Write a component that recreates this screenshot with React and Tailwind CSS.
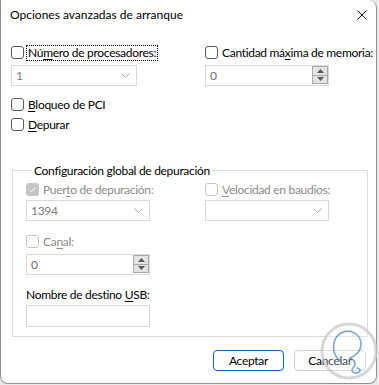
import React from "react";

const font = { fontFamily: "Lato, 'Liberation Sans', sans-serif", letterSpacing: "-0.3px" };

function U({ children }) {
  return <span className="underline underline-offset-[2px]">{children}</span>;
}

function Box({ checked, disabled }) {
  if (checked) {
    return (
      <span className="w-[13px] h-[13px] rounded-[3px] bg-[#c5c5c5] flex items-center justify-center shrink-0">
        <svg width="9" height="9" viewBox="0 0 9 9">
          <path d="M1.5 4.8 L3.6 6.8 L7.6 2.2" fill="none" stroke="#ffffff" strokeWidth="1" />
        </svg>
      </span>
    );
  }
  return (
    <span
      className={
        "w-[13px] h-[13px] rounded-[3px] border bg-white shrink-0 " +
        (disabled ? "border-[#c4c4c4]" : "border-[#5a5a5a]")
      }
    />
  );
}

function Check({ children, checked, disabled, focus }) {
  return (
    <div className="flex items-center h-[13px] whitespace-nowrap">
      <Box checked={checked} disabled={disabled} />
      <span
        className={
          "ml-[3px] leading-[14px] px-[1px] " +
          (disabled ? "text-[#8a8a8a] " : "text-black ") +
          (focus ? "outline outline-1 outline-dotted outline-black" : "")
        }
      >
        {children}
      </span>
    </div>
  );
}

function Combo({ value, w }) {
  return (
    <div className={"h-[21px] border border-[#dadada] bg-white flex items-center justify-between pl-[4px] pr-[6px] " + w}>
      <span className="text-[#7a7a7a] leading-[14px]">{value}</span>
      <svg width="9" height="5" viewBox="0 0 9 5">
        <path d="M0.5 0.5 L4.5 4.5 L8.5 0.5" fill="none" stroke="#a8a8a8" strokeWidth="1" />
      </svg>
    </div>
  );
}

function Spin({ value, w }) {
  return (
    <div className={"h-[21px] border border-[#dadada] bg-white flex items-center justify-between pl-[4px] " + w}>
      <span className="text-[#6b6b6b] leading-[14px]">{value}</span>
      <div className="flex flex-col w-[16px] h-[18px] border border-[#a9a9a9] self-start">
        <div className="flex-1 bg-[#e3e3e3] border-b border-[#a9a9a9] flex items-center justify-center">
          <svg width="7" height="4" viewBox="0 0 7 4"><path d="M0 4 L3.5 0 L7 4 Z" fill="#5a5a5a" /></svg>
        </div>
        <div className="flex-1 bg-[#e3e3e3] flex items-center justify-center">
          <svg width="7" height="4" viewBox="0 0 7 4"><path d="M0 0 L3.5 4 L7 0 Z" fill="#5a5a5a" /></svg>
        </div>
      </div>
    </div>
  );
}

export default function App() {
  return (
    <div className="w-[379px] h-[385px] bg-[#e9e9e9] relative overflow-hidden text-[12px]" style={font}>
      <div className="w-[377px] h-[384px] bg-white border-l border-r border-b border-[#8f8f8f] rounded-tr-[8px] rounded-b-[8px] flex flex-col">
        <div className="h-[30px] flex items-center justify-between pl-[9px] pr-[9px]">
          <span className="text-black text-[12px] leading-[14px] tracking-normal">Opciones avanzadas de arranque</span>
          <svg width="10" height="10" viewBox="0 0 10 10">
            <path d="M0.5 0.5 L9.5 9.5 M9.5 0.5 L0.5 9.5" stroke="#1a1a1a" strokeWidth="1" />
          </svg>
        </div>

        <div className="pl-[10px] mt-[16px] grid grid-cols-[194px_1fr]">
          <div className="flex flex-col">
            <Check focus>
              Nú<U>m</U>ero de procesadores:
            </Check>
            <div className="mt-[6px]">
              <Combo value="1" w="w-[126px]" />
            </div>
          </div>
          <div className="flex flex-col">
            <Check>
              Cantidad má<U>x</U>ima de memoria:
            </Check>
            <div className="mt-[6px]">
              <Spin value="0" w="w-[124px]" />
            </div>
          </div>
        </div>

        <div className="pl-[10px] mt-[12px] flex flex-col gap-[7px]">
          <Check>
            <U>B</U>loqueo de PCI
          </Check>
          <Check>
            <U>D</U>epurar
          </Check>
        </div>

        <fieldset className="ml-[11px] mr-[8px] mt-[33px] h-[173px] border border-[#dcdcdc] px-[13px] pb-[8px]">
          <legend className="ml-[6px] px-[2px] leading-[13px] text-black">Configuración global de depuración</legend>
          <div className="grid grid-cols-[179px_1fr] mt-[6px]">
            <div className="flex flex-col">
              <Check checked disabled>
                Puer<U>t</U>o de depuración:
              </Check>
              <div className="mt-[4px]">
                <Combo value="1394" w="w-[124px]" />
              </div>
              <div className="mt-[14px]">
                <Check disabled>
                  Ca<U>n</U>al:
                </Check>
              </div>
              <div className="mt-[6px]">
                <Spin value="0" w="w-[124px]" />
              </div>
              <div className="mt-[13px] leading-[14px] text-black">
                Nombre de destino <U>U</U>SB:
              </div>
              <div className="mt-[3px] w-[124px] h-[22px] border border-[#dadada] bg-white" />
            </div>
            <div className="flex flex-col">
              <Check disabled>
                <U>V</U>elocidad en baudios:
              </Check>
              <div className="mt-[4px]">
                <Combo value="" w="w-[124px]" />
              </div>
            </div>
          </div>
        </fieldset>

        <div className="flex justify-end gap-[10px] mt-[13px] pr-[10px]">
          <button className="w-[71px] h-[21px] border border-[#0067c0] rounded-[4px] bg-white text-black leading-[14px]">
            Aceptar
          </button>
          <button className="w-[72px] h-[21px] border border-[#cfcfcf] rounded-[4px] bg-[#fdfdfd] text-black leading-[14px]">
            Cancelar
          </button>
        </div>
      </div>

      <svg className="absolute left-[319px] top-[321px]" width="60" height="64" viewBox="0 0 60 64">
        <circle cx="30" cy="30" r="27" fill="rgba(255,255,255,0.25)" stroke="rgba(200,200,205,0.75)" strokeWidth="3" />
        <path
          d="M22 40 C12 34 12 18 22 12 C31 7 42 13 42 23 C42 31 36 35 31 37 C36 39 38 43 34 47 C31 50 35 54 40 51 C42 50 41 47 38 47"
          fill="none"
          stroke="rgba(70,130,200,0.7)"
          strokeWidth="1.6"
          strokeLinecap="round"
        />
      </svg>
    </div>
  );
}
